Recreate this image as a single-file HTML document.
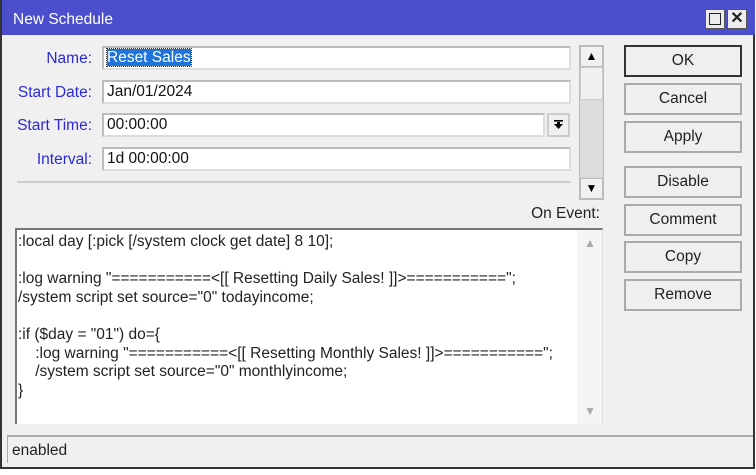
<!DOCTYPE html>
<html><head><style>
*{box-sizing:border-box;margin:0;padding:0}
body{width:756px;height:475px;background:#fff;font-family:"Liberation Sans",sans-serif;font-size:15.5px;position:relative;overflow:hidden}
.win{position:absolute;left:0;top:0;width:755px;height:469px;background:#f0f0f0;border:2px solid #333;border-top:none}
.title{position:absolute;left:0;top:0;width:753px;height:35px;background:#4b4fcb;color:#fff;font-size:15.5px;padding:11px 0 0 11px}
.tb{position:absolute;top:9px;width:20px;height:20px;background:#ececec;border:1px solid #555}
.lbl{position:absolute;right:661px;color:#2a2ad8;font-size:15.5px}
.inp{position:absolute;background:#fff;border:2px solid #bbb;border-right-color:#ddd;border-bottom-color:#ddd;height:24px;padding:1px 3px;font-size:15.5px;color:#111}
.btn{position:absolute;left:622px;width:118px;height:32px;border:2px solid #aaa;background:#efefef;text-align:center;line-height:28px;font-size:15.5px;color:#222}
.sb{position:absolute;left:577px;top:45px;width:25px;height:155px;background:#dcdcdc;border:1px solid #bbb}
.abtn{position:absolute;width:23px;background:#f0f0f0;border:1px solid #bbb;text-align:center;font-size:12px;color:#000}
pre{font-family:"Liberation Sans",sans-serif;font-size:15.5px;line-height:18.6px;color:#222}
</style></head><body>
<div class="win">
<div class="title">New Schedule</div>
<div class="tb" style="left:703px"><div style="position:absolute;left:3px;top:3px;width:12px;height:12px;border:1.5px solid #222"></div></div>
<div class="tb" style="left:725px;font-weight:bold;text-align:center;line-height:18px;font-size:16px;color:#222">✕</div>

<div class="lbl" style="top:50px">Name:</div>
<div class="lbl" style="top:84px">Start Date:</div>
<div class="lbl" style="top:117px">Start Time:</div>
<div class="lbl" style="top:151px">Interval:</div>

<div class="inp" style="left:100px;top:46px;width:469px"><span style="background:#1e74d8;color:#fff;outline:1px dotted #333">Reset Sales</span></div>
<div class="inp" style="left:100px;top:80px;width:469px">Jan/01/2024</div>
<div class="inp" style="left:100px;top:113px;width:443px">00:00:00</div>
<div class="abtn" style="left:545px;top:113px;height:24px;border:2px solid #ccc">
<svg width="19" height="20" viewBox="0 0 19 20"><rect x="5" y="5" width="9" height="1.6" fill="#000"/><path d="M5 9h9l-4.5 5z" fill="#000"/><rect x="8" y="7" width="3" height="3" fill="#000"/></svg></div>
<div class="inp" style="left:100px;top:147px;width:469px">1d 00:00:00</div>

<div class="sb">
<div class="abtn" style="left:0;top:0;height:21px;line-height:19px">▲</div>
<div style="position:absolute;left:0;top:21px;width:23px;height:33px;background:#f0f0f0;border:1px solid #ccc"></div>
<div class="abtn" style="left:0;bottom:0;height:21px;line-height:19px">▼</div>
</div>
<div style="position:absolute;left:15px;top:181px;width:554px;height:2px;background:#ccc"></div>

<div class="btn" style="top:45px;border-color:#333">OK</div>
<div class="btn" style="top:83px">Cancel</div>
<div class="btn" style="top:121px">Apply</div>
<div class="btn" style="top:166px">Disable</div>
<div class="btn" style="top:204px">Comment</div>
<div class="btn" style="top:241px">Copy</div>
<div class="btn" style="top:279px">Remove</div>

<div style="position:absolute;right:153px;top:205px;color:#222">On Event:</div>

<div style="position:absolute;left:13px;top:228px;width:588px;height:196px;background:#fff;border-left:2px solid #777;border-top:2px solid #777;border-right:1px solid #ddd">
<div style="position:absolute;right:0;top:0;width:25px;height:194px;background:#f4f4f4"></div>
<div style="position:absolute;right:6px;top:6px;color:#aaa;font-size:12px">▲</div>
<div style="position:absolute;right:6px;bottom:6px;color:#aaa;font-size:12px">▼</div>
<pre style="position:absolute;left:1px;top:3px">:local day [:pick [/system clock get date] 8 10];

:log warning "===========&lt;[[ Resetting Daily Sales! ]]&gt;===========";
/system script set source="0" todayincome;

:if ($day = "01") do={
    :log warning "===========&lt;[[ Resetting Monthly Sales! ]]&gt;===========";
    /system script set source="0" monthlyincome;
}</pre>
</div>

<div style="position:absolute;left:5px;top:435px;width:746px;height:28px;border-top:2px solid #aaa;border-left:1px solid #aaa;padding:5px 0 0 4px;color:#222">enabled</div>
</div>
</body></html>
